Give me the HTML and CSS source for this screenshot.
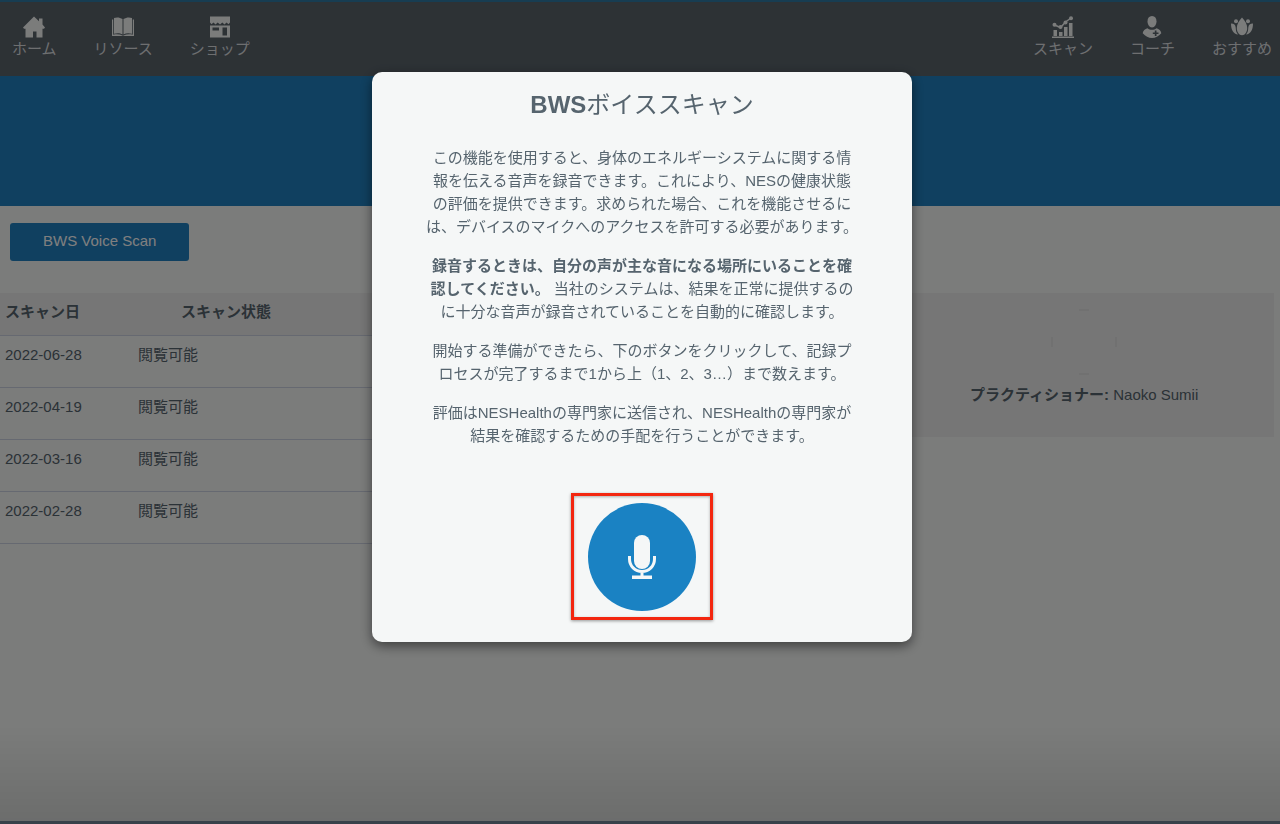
FILE: index.html
```html
<!DOCTYPE html>
<html lang="ja">
<head>
    <meta charset="UTF-8">
    <title>BWS Voice Scan</title>
    <meta name="viewport" content="width=device-width, initial-scale=1">
    <link rel="stylesheet" href="styles.css">
</head>
<body>
<header class="topbar">
    <nav class="menu">
        <a href="#home">
            <svg viewBox="0 0 22 22"><path d="M11 .5 16 5.200V2.500h3.500v6L22 11.500l-1 1.200h-1.500V21.500h-6V15.500h-3.500v6H2.500v-8.800H1L0 11.500z"/></svg>
            ホーム
        </a>
        <a href="#resources">
            <svg viewBox="0 0 22 22"><path d="M2 2C5 1 8 1.500 10.500 3v15.500C8 17 5 17 2 17.800zM20 2c-3-1-6-.5-8.500 1v15.500c2.500-1.500 5.500-1.500 8.500-.7z"/><path d="M0 3.500h1.200v15.300c3.500-.8 6.500-.5 9.800 1 3.300-1.500 6.300-1.800 9.800-1V3.500H22V20H0z"/></svg>
            リソース
        </a>
        <a href="#shop">
            <svg viewBox="0 0 22 22"><path d="M1 .5h20v6L19.500 8.300 17.500 6.500l-2 2-2.200-2-2.300 2-2.300-2-2.200 2-2-2-2 1.800L1 6.500z"/><path fill-rule="evenodd" d="M1 9.500h20V21.500H1zM3.500 11.500v3H10v-3zM13.500 11.500v8H18v-8z"/></svg>
            ショップ
        </a>
    </nav>
    <nav class="menu">
        <a href="#scan">
            <svg viewBox="0 0 22 22"><path d="M0 20.500h22V22H0zM1.500 14H5v6H1.500zM7 16h3.500v4H7zM12 11h3.500v9H12zM17 7h3.500v13H17z"/><path class="line" d="m2.500 9 6 2.500 5-5.500 5.500-4"/><circle cx="2.500" cy="8.800" r="2"/><circle cx="8.500" cy="11" r="2"/><circle cx="13.500" cy="6.500" r="2"/><circle cx="19" cy="2.200" r="2"/></svg>
            スキャン
        </a>
        <a href="#coach">
            <svg viewBox="0 0 22 22"><path d="M11 0c3 0 4.500 2.200 4.500 5.300S13.800 11.500 11 11.500 6.500 8.500 6.500 5.300 8 0 11 0z"/><path fill-rule="evenodd" d="M6.500 12.300c2.500 2 6.500 2 9 0 2.500.7 4.500 2.500 4.800 5C17.500 20.500 14.500 22 11 22s-6.500-1.500-9.300-4.700c.3-2.500 2.300-4.300 4.800-5zM13.800 14.500v2h-2v1.600h2v2h1.700v-2h2v-1.600h-2v-2z"/></svg>
            コーチ
        </a>
        <a href="#recommended">
            <svg viewBox="0 0 22 22"><path d="M11 1.500c3 3.500 5.200 6.500 5.200 10.500S14 19.200 11 19.200 5.800 16 5.800 12 8 5 11 1.500z"/><path d="M0 7.500c3 0 4.500 1.500 4.700 4 .1 3 .6 5 2.300 7C2.500 18 0 14 0 7.500zM22 7.500c-3 0-4.500 1.500-4.700 4-.1 3-.6 5-2.300 7 4.500-.5 7-4.500 7-11z"/><circle cx="5" cy="5.200" r="2"/><circle cx="17" cy="5.200" r="2"/></svg>
            おすすめ
        </a>
    </nav>
</header>
<div class="banner"></div>
<main class="content">
    <button class="scan-button" type="button">BWS Voice Scan</button>
    <div class="columns">
        <table class="scans">
            <thead>
            <tr><th class="date">スキャン日</th><th class="state">スキャン状態</th><th></th></tr>
            </thead>
            <tbody>
            <tr><td>2022-06-28</td><td>閲覧可能</td><td></td></tr>
            <tr><td>2022-04-19</td><td>閲覧可能</td><td></td></tr>
            <tr><td>2022-03-16</td><td>閲覧可能</td><td></td></tr>
            <tr><td>2022-02-28</td><td>閲覧可能</td><td></td></tr>
            </tbody>
        </table>
        <aside class="practitioner">
            <svg class="avatar" viewBox="0 0 66 66"><path d="M28 1h10M28 65h10M1 28v10M65 28v10"/></svg>
            <div><b>プラクティショナー:</b> Naoko Sumii</div>
        </aside>
    </div>
</main>

<div class="overlay">
    <div class="modal" role="dialog" aria-modal="true" aria-labelledby="modal-title">
        <h2 id="modal-title"><b>BWS</b>ボイススキャン</h2>
        <p>この機能を使用すると、身体のエネルギーシステムに関する情<br>報を伝える音声を録音できます。これにより、NESの健康状態<br>の評価を提供できます。求められた場合、これを機能させるに<br>は、デバイスのマイクへのアクセスを許可する必要があります。</p>
        <p><b>録音するときは、自分の声が主な音になる場所にいることを確<br>認してください。</b> 当社のシステムは、結果を正常に提供するの<br>に十分な音声が録音されていることを自動的に確認します。</p>
        <p>開始する準備ができたら、下のボタンをクリックして、記録プ<br>ロセスが完了するまで1から上（1、2、3…）まで数えます。</p>
        <p>評価はNESHealthの専門家に送信され、NESHealthの専門家が<br>結果を確認するための手配を行うことができます。</p>
        <div class="record-frame">
            <button class="record" type="button" aria-label="録音">
                <svg viewBox="0 0 28 44"><rect x="6" y="0" width="16" height="34" rx="8"/><path class="cup" d="M1.500 21v3c0 7 5.500 12.500 12.500 12.500s12.500-5.500 12.500-12.500v-3M14 36v6"/><path d="M4 40.500h20V44H4z"/></svg>
            </button>
        </div>
    </div>
</div>
</body>
</html>
```

FILE: styles.css
```css
* {
    box-sizing: border-box;
}
body {
    margin: 0;
    min-height: 100vh;
    background-color: #f6f8f7;
    border-bottom: 3px solid #8095a8;
    color: #56646e;
    font-family: "Liberation Sans", "Noto Sans CJK JP", sans-serif;
    font-size: 15px;
    line-height: 23px;
}
.topbar {
    display: flex;
    justify-content: space-between;
    height: 76px;
    padding: 14px 8px 0 12px;
    border-top: 2px solid #2f7ba5;
    background-color: #5a646b;
}
.menu {
    display: flex;
    gap: 37px;
}
.menu a {
    display: flex;
    flex-direction: column;
    align-items: center;
    color: #dcdfe0;
    line-height: 22px;
    text-decoration: none;
}
.menu svg {
    width: 22px;
    height: 22px;
    fill: #f6f8f7;
}
.menu .line {
    fill: none;
    stroke: #f6f8f7;
    stroke-width: 1.5;
}
.banner {
    height: 130px;
    background-color: #2080c0;
}
.content {
    padding: 17px 6px 0 0;
}
.scan-button {
    display: block;
    height: 38px;
    margin: 0 0 32px 10px;
    padding: 0 33px 3px;
    border: 0;
    border-radius: 3px;
    background-color: #2080c0;
    color: #fff;
    font: inherit;
}
.columns {
    display: grid;
    grid-template-columns: 7fr 3fr;
    align-items: start;
    gap: 8px;
}
.scans {
    width: 100%;
    border-collapse: collapse;
    table-layout: fixed;
}
.scans th {
    height: 42px;
    padding: 0 5px 4px;
    background-color: #ededed;
    text-align: left;
}
.scans .date {
    width: 133px;
}
.scans .state {
    width: 186px;
    text-align: center;
}
.scans td {
    height: 52px;
    padding: 7px 5px;
    vertical-align: top;
}
.scans tr {
    border-bottom: 1px solid #cdd3e2;
}
.practitioner {
    height: 144px;
    padding-top: 16px;
    background-color: #ededed;
    text-align: center;
}
.avatar {
    display: block;
    width: 66px;
    height: 66px;
    margin: 0 auto 8px;
    fill: none;
    stroke: #d8d8d8;
}
.overlay {
    position: fixed;
    inset: 0;
    padding: 72px 0 0 4px;
    background: linear-gradient(transparent 88%, rgba(0, 0, 0, 0.12)), rgba(0, 0, 0, 0.5);
}
.modal {
    max-width: 540px;
    margin: 0 auto;
    padding: 16px 40px 22px;
    border-radius: 10px;
    background-color: #f5f7f7;
    box-shadow: 0 4px 12px rgba(0, 0, 0, 0.5);
    text-align: center;
}
.modal h2 {
    margin: 0 0 24px;
    font-size: 24px;
    font-weight: 400;
    line-height: 34px;
}
.modal p {
    margin: 0 0 16px;
}
.record-frame {
    display: flex;
    align-items: center;
    justify-content: center;
    width: 142px;
    height: 127px;
    margin: 46px auto 0;
    border: 3px solid #f3260f;
    box-shadow: 0 1px 3px rgba(0, 0, 0, 0.4), inset 0 1px 3px rgba(0, 0, 0, 0.3);
}
.record {
    display: flex;
    align-items: center;
    justify-content: center;
    width: 108px;
    height: 108px;
    padding: 0;
    border: 0;
    border-radius: 50%;
    background-color: #1a82c3;
}
.record svg {
    width: 28px;
    height: 44px;
    fill: #f5f7f7;
}
.record .cup {
    fill: none;
    stroke: #f5f7f7;
    stroke-width: 3;
}
```
